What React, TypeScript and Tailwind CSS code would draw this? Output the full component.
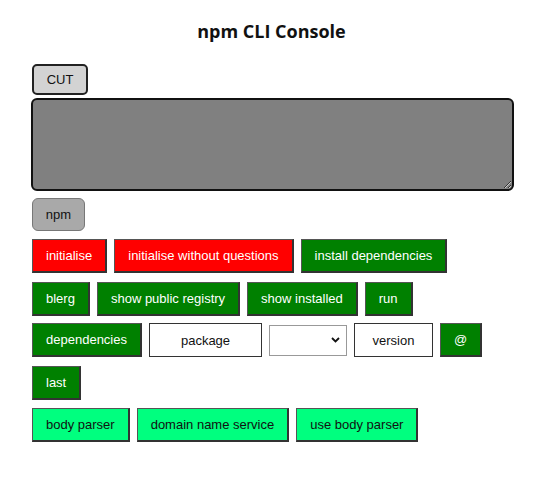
import React from "react";

const base =
  "h-[34px] px-[13px] text-[13px] border border-[#555] border-r-2 border-b-2 border-r-[#333] border-b-[#333] whitespace-nowrap";
const red = `${base} bg-[#ff0000] text-white`;
const green = `${base} bg-[#008000] text-white`;
const spring = `${base} bg-[#00ff7f] text-[#111]`;

export default function App() {
  return (
    <div
      className="w-[543px] h-[486px] bg-white"
      style={{ fontFamily: '"Liberation Sans", Arial, sans-serif' }}
    >
      <h1
        className="pt-[19px] text-center text-[18px] font-bold text-[#111] leading-[24px]"
        style={{ fontFamily: '"Open Sans", sans-serif' }}
      >
        npm CLI Console
      </h1>
      <div className="pl-[32px] pr-[29px] pt-[21px]">
        <button className="h-[31px] w-[56px] rounded-[5px] border-2 border-[#222] bg-[#d3d3d3] text-[13px] text-[#111]">
          CUT
        </button>
        <textarea className="block mt-[3px] -ml-[1px] w-[483px] h-[93px] rounded-[6px] border-2 border-[#111] bg-[#808080] resize" />
        <button className="mt-[7px] h-[33px] w-[53px] rounded-[6px] border border-[#777] bg-[#a9a9a9] text-[13px] text-[#111]">
          npm
        </button>
        <div className="mt-[8px] flex gap-[7px]">
          <button className={red}>initialise</button>
          <button className={red}>initialise without questions</button>
          <button className={green}>install dependencies</button>
        </div>
        <div className="mt-[9px] flex gap-[7px]">
          <button className={green}>blerg</button>
          <button className={green}>show public registry</button>
          <button className={green}>show installed</button>
          <button className={green}>run</button>
        </div>
        <div className="mt-[7px] flex gap-[7px] items-center">
          <button className={`${green} w-[110px]`}>dependencies</button>
          <input
            className="h-[34px] w-[113px] border border-[#333] text-center text-[13px] text-[#111] placeholder:text-[#111] outline-none"
            placeholder="package"
          />
          <div className="relative h-[31px] w-[78px] border border-[#999] bg-white">
            <svg
              className="absolute right-[6px] top-[11px]"
              width="9"
              height="6"
              viewBox="0 0 9 6"
            >
              <path d="M1 1 L4.5 4.5 L8 1" stroke="#111" strokeWidth="1.8" fill="none" />
            </svg>
          </div>
          <input
            className="h-[34px] w-[79px] border border-[#333] text-center text-[13px] text-[#111] placeholder:text-[#111] outline-none"
            placeholder="version"
          />
          <button className={`${green} w-[42px] px-0`}>@</button>
        </div>
        <div className="mt-[9px] flex">
          <button className={`${green} w-[49px] px-0`}>last</button>
        </div>
        <div className="mt-[8px] flex gap-[7px]">
          <button className={spring}>body parser</button>
          <button className={spring}>domain name service</button>
          <button className={spring}>use body parser</button>
        </div>
      </div>
    </div>
  );
}
